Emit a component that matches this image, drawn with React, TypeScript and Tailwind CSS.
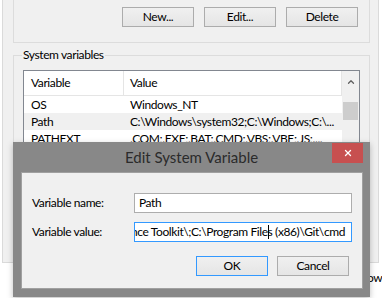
import { X, ChevronUp } from 'lucide-react';

function WinButton({ label, primary = false }: { label: string; primary?: boolean }) {
  return (
    <div
      className={`flex h-[20px] w-[72px] items-center justify-center border bg-gradient-to-b from-[#f0f0f0] to-[#e5e5e5] text-[12px] text-black ${
        primary ? 'border-[#3399ff]' : 'border-[#acacac]'
      }`}
    >
      {label}
    </div>
  );
}

const rows = [
  { name: 'OS', value: 'Windows_NT', selected: false },
  { name: 'Path', value: 'C:\\Windows\\system32;C:\\Windows;C:\\...', selected: true },
  { name: 'PATHEXT', value: '.COM;.EXE;.BAT;.CMD;.VBS;.VBE;.JS;....', selected: false },
];

export default function App() {
  return (
    <div className="relative h-[298px] w-[382px] overflow-hidden bg-white font-['Lato',sans-serif] text-[12px] leading-none tracking-[-0.4px] text-black">
      {/* Environment Variables window (behind) */}
      <div className="ml-[2px] flex h-[263px] w-[377px] flex-col border-x border-b border-[#dadada] bg-[#f0f0f0] pb-[3px] pl-[10px] pr-[8px]">
        {/* User variables group (top cut off) */}
        <div className="flex h-[43px] shrink-0 justify-end gap-[10px] border-x border-b border-[#dcdcdc] pr-[11px] pt-[7px]">
          <WinButton label="New..." />
          <WinButton label="Edit..." />
          <WinButton label="Delete" />
        </div>

        {/* System variables group */}
        <div className="relative mt-[12px] min-h-0 flex-1 border border-[#dcdcdc] px-[9px] pt-[14px]">
          <span className="absolute left-[8px] top-[-7px] bg-[#f0f0f0] px-[1px]">System variables</span>
          <div className="flex h-[170px] overflow-hidden border border-[#828790] bg-white">
            <div className="flex flex-1 flex-col">
              <div className="flex h-[25px] shrink-0 items-center border-b border-r border-[#e5e5e5]">
                <div className="flex h-full w-[100px] items-center border-r border-[#e5e5e5] pl-[7px]">Variable</div>
                <div className="pl-[6px]">Value</div>
              </div>
              {rows.map((r) => (
                <div
                  key={r.name}
                  className={`flex h-[17px] shrink-0 items-center ${r.selected ? 'bg-[#f0f0f0]' : ''}`}
                >
                  <div className="w-[100px] pl-[7px]">{r.name}</div>
                  <div className="whitespace-nowrap pl-[6px]">{r.value}</div>
                </div>
              ))}
            </div>
            <div className="flex w-[17px] flex-col items-center bg-[#f0f0f0]">
              <ChevronUp className="mt-[6px] h-[10px] w-[10px] text-[#606060]" strokeWidth={3} />
              <div className="mt-[15px] h-[18px] w-[15px] bg-[#cdcdcd]" />
            </div>
          </div>
        </div>
      </div>

      {/* Window behind, lower */}
      <div className="ml-[367px] mt-[9px] text-[12px]">ow</div>

      {/* Edit System Variable dialog */}
      <div className="absolute left-[13px] top-[142px] flex h-[155px] w-[357px] flex-col bg-[#888888] shadow-[0_2px_6px_rgba(0,0,0,0.25)]">
        <div className="relative flex h-[30px] items-center justify-center">
          <span className="text-[15px] tracking-normal text-[#2b2b2b]">Edit System Variable</span>
          <div className="absolute right-[7px] top-[1px] flex h-[20px] w-[31px] items-center justify-center bg-[#c75050]">
            <X className="h-[10px] w-[10px] text-white" strokeWidth={3} />
          </div>
        </div>
        <div className="mx-[8px] mb-[8px] mr-[7px] flex flex-1 flex-col border border-[#a0a0a0] bg-[#f0f0f0] px-[10px] pt-[20px]">
          <div className="flex items-center">
            <span className="w-[102px]">Variable name:</span>
            <div className="flex h-[20px] flex-1 items-center border border-[#adadad] bg-white pl-[4px]">Path</div>
          </div>
          <div className="mt-[9px] flex items-center">
            <span className="w-[102px]">Variable value:</span>
            <div className="flex h-[20px] flex-1 items-center justify-end overflow-hidden border border-[#3399ff] bg-white pr-[6px]">
              <span className="whitespace-nowrap">
                Performance Toolkit\;C:\Program File
                <span className="relative inline-block w-0">
                  <span className="absolute left-0 top-[-11px] h-[14px] w-px bg-black" />
                </span>
                s (x86)\Git\cmd
              </span>
            </div>
          </div>
          <div className="mt-[14px] flex justify-end gap-[9px] pr-[3px]">
            <WinButton label="OK" primary />
            <WinButton label="Cancel" />
          </div>
        </div>
      </div>
    </div>
  );
}
